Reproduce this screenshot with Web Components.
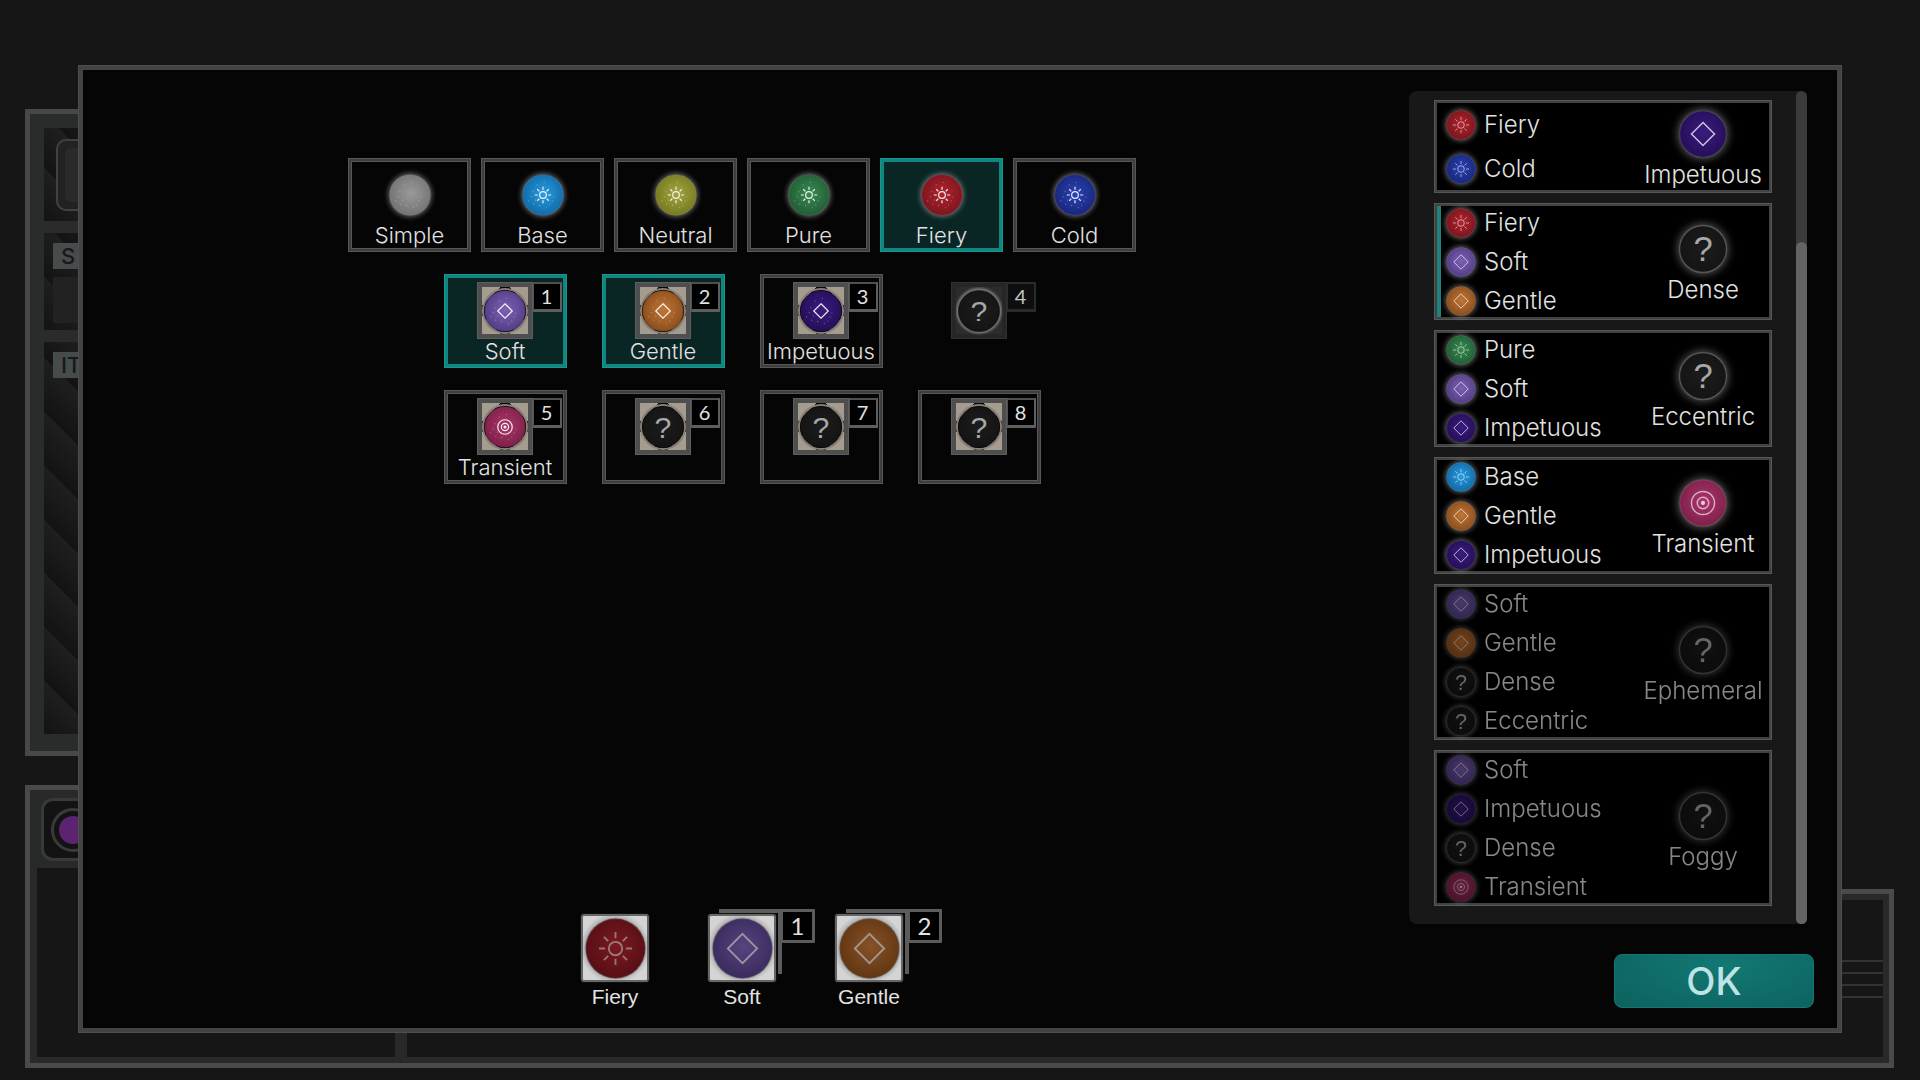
<!DOCTYPE html>
<html lang="en">
<head>
<meta charset="utf-8">
<title>Catalyst selection</title>
<style>
  html, body { height: 100%; }
  body {
    margin: 0;
    background: #161616;
    color: #e2e2e2;
    font-family: Inter, "Open Sans", sans-serif;
    font-weight: 300;
    overflow: hidden;
  }
</style>
</head>
<body>
<game-backdrop></game-backdrop>

<select-dialog>
  <tile-row slot="tiles">
    <element-tile kind="simple" label="Simple"></element-tile>
    <element-tile kind="base" label="Base"></element-tile>
    <element-tile kind="neutral" label="Neutral"></element-tile>
    <element-tile kind="pure" label="Pure"></element-tile>
    <element-tile kind="fiery" label="Fiery" selected></element-tile>
    <element-tile kind="cold" label="Cold"></element-tile>
  </tile-row>
  <tile-row slot="tiles" wide>
    <element-tile kind="soft" label="Soft" number="1" selected></element-tile>
    <element-tile kind="gentle" label="Gentle" number="2" selected></element-tile>
    <element-tile kind="impetuous" label="Impetuous" number="3"></element-tile>
    <element-tile kind="unknown" number="4" locked></element-tile>
  </tile-row>
  <tile-row slot="tiles" wide>
    <element-tile kind="transient" label="Transient" number="5"></element-tile>
    <element-tile kind="unknown" number="6"></element-tile>
    <element-tile kind="unknown" number="7"></element-tile>
    <element-tile kind="unknown" number="8"></element-tile>
  </tile-row>

  <picked-card slot="picked" kind="fiery" label="Fiery"></picked-card>
  <picked-card slot="picked" kind="soft" label="Soft" number="1"></picked-card>
  <picked-card slot="picked" kind="gentle" label="Gentle" number="2"></picked-card>

  <recipe-card slot="recipes" parts="Fiery,Cold" result="Impetuous"></recipe-card>
  <recipe-card slot="recipes" parts="Fiery,Soft,Gentle" result="Dense" active></recipe-card>
  <recipe-card slot="recipes" parts="Pure,Soft,Impetuous" result="Eccentric"></recipe-card>
  <recipe-card slot="recipes" parts="Base,Gentle,Impetuous" result="Transient"></recipe-card>
  <recipe-card slot="recipes" parts="Soft,Gentle,Dense,Eccentric" result="Ephemeral" dim></recipe-card>
  <recipe-card slot="recipes" parts="Soft,Impetuous,Dense,Transient" result="Foggy" dim></recipe-card>
</select-dialog>

<script>
// Orb colours: [centre, edge, glyph]
const KINDS = {
  simple:    ['#9a9a9a', '#727272', 'none'],
  base:      ['#2a9ce0', '#1068a4', 'sun'],
  neutral:   ['#a2a640', '#74791f', 'sun'],
  pure:      ['#3a8a52', '#1f5c34', 'sun'],
  fiery:     ['#b0242f', '#7a141d', 'sun'],
  cold:      ['#2a42b4', '#182678', 'sun'],
  soft:      ['#7c62b2', '#513c86', 'diamond'],
  gentle:    ['#c07638', '#8a4c1a', 'diamond'],
  impetuous: ['#3a1c80', '#240e56', 'diamond'],
  transient: ['#aa366a', '#7c1f48', 'rings'],
  unknown:   ['#1c1c1c', '#141414', 'question'],
};

const GLYPHS = {
  none: '',
  sun: `<circle r="11"/>
    <path d="M0-17V-27M0 17V27M-17 0H-27M17 0H27M-12-12L-19-19M12-12L19-19M-12 12L-19 19M12 12L19 19"/>`,
  diamond: '<path d="M0-24L24 0L0 24L-24 0Z"/>',
  rings: '<circle r="24"/><circle r="12"/><circle r="3" fill="currentColor"/>',
  question: '<text class="q" y="25" text-anchor="middle">?</text>',
};

const SPECKS = [[-24, -8], [-18, 12], [-28, 4], [-8, 25], [8, 30], [22, 14], [-14, -24], [-22, 22],
  [16, 24], [26, 5], [-34, 14], [3, -30]];

/** Kind for an element name; anything not discovered yet is unknown. */
function kindOf(name) {
  const key = name.toLowerCase();
  return KINDS[key] ? key : 'unknown';
}

// Renders styles() + template() into an open shadow root on connect.
class BaseElement extends HTMLElement {
  constructor() {
    super();
    this.attachShadow({ mode: 'open' });
  }

  connectedCallback() {
    this.shadowRoot.innerHTML = `<style>${this.styles()}</style>${this.template()}`;
  }

  attr(name) { return this.getAttribute(name) || ''; }
  styles() { return ''; }
  template() { return ''; }
}

// <alchemy-orb kind="fiery" sparkle> - size comes from --orb
class AlchemyOrb extends BaseElement {
  styles() {
    return `
      :host { display: block; width: var(--orb, 30px); height: var(--orb, 30px); flex: none; border-radius: 50%; }
      :host([glow]) { box-shadow: 0 0 var(--glow, 5px) 1px rgba(200, 200, 200, .45); }
      svg { display: block; width: 100%; height: 100%; overflow: visible; }
      .glyph { fill: none; stroke: currentColor; stroke-width: 3; color: rgba(255, 255, 255, .62); }
      .diamond { color: rgba(255, 255, 255, .75); }
      .sparkle { color: rgba(255, 255, 255, .9); stroke-width: 4; }
      .q { fill: #a8a8a8; stroke: none; font: 400 72px "Liberation Sans", Arial, sans-serif; }
      .specks { fill: rgba(255, 255, 255, .3); }
    `;
  }

  template() {
    const [centre, edge, glyph] = KINDS[this.attr('kind')];
    const sparkle = this.hasAttribute('sparkle') && glyph !== 'question';
    const scale = sparkle ? 0.72 : 1;
    const specks = sparkle ? SPECKS.map(([x, y]) => `<circle cx="${x}" cy="${y}" r="1.5"/>`).join('') : '';
    const rim = glyph === 'question' ? '#555' : 'rgba(150,150,150,.35)';
    return `
      <svg viewBox="-50 -50 100 100" aria-hidden="true">
        <defs>
          <radialGradient id="g" cx="52%" cy="46%" r="56%">
            <stop offset="0" stop-color="${centre}"/>
            <stop offset="1" stop-color="${edge}"/>
          </radialGradient>
        </defs>
        <circle r="49" fill="url(#g)" stroke="var(--rim, ${rim})" stroke-width="3"/>
        <g class="specks">${specks}</g>
        <g class="glyph ${glyph} ${sparkle ? 'sparkle' : ''}" transform="scale(${scale})">${GLYPHS[glyph]}</g>
      </svg>`;
  }
}

class TileRow extends BaseElement {
  styles() {
    return `
      :host { display: flex; justify-content: center; gap: 10px; }
      :host([wide]) { gap: 35px; }
    `;
  }

  template() { return '<slot></slot>'; }
}

class ElementTile extends BaseElement {
  styles() {
    return `
      :host { display: block; }
      button {
        position: relative;
        box-sizing: border-box;
        display: flex; flex-direction: column; align-items: center;
        width: 123px; height: 94px; padding: 15px 0 0;
        border: 1px solid #575757;
        box-shadow: inset 0 0 0 2px #3e3e3e, inset 0 0 0 3px #575757;
        background: none; color: inherit;
        font: inherit; font-size: 22px; line-height: 24px;
      }
      :host([selected]) button {
        border-color: #16968f; background: #092524;
        box-shadow: inset 0 0 0 3px #0f8680;
      }
      alchemy-orb { --orb: 42px; }
      .plain { margin-bottom: 7px; }
      :host([number]) button { padding-top: 7px; }
      .frame {
        box-sizing: border-box;
        display: grid; place-items: center;
        width: 56px; height: 57px;
        border: 5px solid #4e4e4e; outline: 1px solid #5e5e5e; outline-offset: -1px;
        background:
          linear-gradient(45deg, #a59c90 13px, transparent 13px, transparent calc(100% - 13px), #a59c90 calc(100% - 13px)),
          linear-gradient(135deg, #a59c90 13px, transparent 13px, transparent calc(100% - 13px), #a59c90 calc(100% - 13px)),
          #080808;
      }
      .frame alchemy-orb { --rim: rgba(0, 0, 0, .3); box-shadow: 0 0 0 2px #8a8278; }
      .badge {
        position: absolute; left: 88px; top: 7px;
        box-sizing: border-box; width: 29px; height: 30px;
        border: 2px solid #505050; border-left-width: 1px; border-right-color: #5e5e5e; border-bottom-color: #5e5e5e;
        border-bottom-width: 3px;
        background: #000;
        font: 400 20px/24px Lato, sans-serif; text-align: center;
      }
      :host([locked]) button { border-color: transparent; box-shadow: none; }
      :host([locked]) .frame {
        border-color: #262626; outline-color: #303030;
        background: radial-gradient(circle, #999 45%, #2c2c2c 75%);
      }
      :host([locked]) .frame alchemy-orb { box-shadow: 0 0 3px 1px #8a8a8a; }
      :host([locked]) .badge { border-color: #2a2a2a; background: #0e0e0e; color: #c4c4c4; }
    `;
  }

  template() {
    const number = this.attr('number');
    const orb = `<alchemy-orb kind="${this.attr('kind')}" sparkle ${number ? '' : 'glow class="plain"'}></alchemy-orb>`;
    const icon = number ? `<span class="frame">${orb}</span><span class="badge">${number}</span>` : orb;
    return `
      <button type="button" aria-pressed="${this.hasAttribute('selected')}"
        ${this.hasAttribute('locked') ? 'disabled' : ''}>${icon}<span>${this.attr('label')}</span></button>`;
  }
}

class PickedCard extends BaseElement {
  styles() {
    return `
      :host {
        position: relative;
        display: flex; flex-direction: column; align-items: center; gap: 3px; width: 68px;
        font: 400 21px/24px "Liberation Sans", Arial, sans-serif;
      }
      .plate {
        position: relative;
        box-sizing: border-box; width: 68px; height: 68px;
        display: grid; place-items: center;
        border: 2px solid #666; border-radius: 3px;
        background: radial-gradient(circle, #888 50%, #d4d4d4 78%);
        box-shadow: 0 0 0 1px #111;
      }
      alchemy-orb { --orb: 61px; filter: brightness(.7); }
      .back {
        position: absolute; left: 11px; top: -5px;
        box-sizing: border-box; width: 63px; height: 65px;
        border: 4px solid #5c5c5c; border-left: 0; border-bottom: 0;
      }
      .badge {
        position: absolute; left: 73px; top: -5px;
        box-sizing: border-box; width: 34px; height: 34px;
        border: 3px solid #5c5c5c; border-left-width: 2px; border-radius: 1px; background: #000;
        font: 400 24px/28px Lato, sans-serif; text-align: center;
      }
    `;
  }

  template() {
    const number = this.attr('number');
    return `
      ${number ? '<span class="back"></span>' : ''}
      <span class="plate"><alchemy-orb kind="${this.attr('kind')}"></alchemy-orb></span>
      ${number ? `<span class="badge">${number}</span>` : ''}
      <span>${this.attr('label')}</span>`;
  }
}

class RecipeCard extends BaseElement {
  styles() {
    return `
      :host {
        position: relative;
        display: flex; justify-content: space-between;
        min-height: 93px;
        background: #000;
        box-shadow: inset 0 0 0 1px #575757, inset 0 0 0 3px #424242;
        font-size: 24px; line-height: 24px;
      }
      :host([active])::before {
        content: ""; position: absolute; left: 3px; top: 3px; bottom: 3px;
        width: 4px; background: #1d837e;
      }
      ul {
        display: flex; flex-direction: column; justify-content: space-evenly;
        margin: 0; padding: 0 0 0 12px; list-style: none;
      }
      li { display: flex; align-items: center; gap: 8px; height: 39px; }
      .result {
        display: flex; flex-direction: column; align-items: center; justify-content: center; gap: 5px;
        width: 138px; padding-top: 4px;
      }
      .result alchemy-orb { --orb: 48px; --glow: 8px; }
      :host([dim]) ul, :host([dim]) .result { opacity: .6; }
    `;
  }

  template() {
    const result = this.attr('result');
    const parts = this.attr('parts').split(',')
        .map((name) => `<li><alchemy-orb kind="${kindOf(name)}" glow></alchemy-orb>${name}</li>`)
        .join('');
    return `
      <ul>${parts}</ul>
      <div class="result"><alchemy-orb kind="${kindOf(result)}" glow></alchemy-orb><span>${result}</span></div>`;
  }
}

class SelectDialog extends BaseElement {
  styles() {
    return `
      :host {
        position: fixed; inset: 65px 78px 47px;
        box-sizing: border-box;
        display: flex;
        border: 5px solid #434343; outline: 1px solid #4e4e4e; outline-offset: -1px;
        background: #050505;
      }
      main {
        flex: 1;
        display: flex; flex-direction: column; gap: 22px;
        padding: 88px 8px 19px 0;
      }
      .picked { display: flex; justify-content: center; gap: 59px; margin-top: auto; }
      aside {
        flex: none; width: 428px; box-sizing: border-box;
        display: flex; flex-direction: column; gap: 30px;
        padding: 21px 0 20px;
      }
      .list {
        flex: 1; display: flex; margin-right: 30px;
        border-radius: 8px; background: #181818;
      }
      .cards { flex: 1; display: flex; flex-direction: column; gap: 10px; padding: 9px 24px 0 25px; }
      .track { width: 11px; display: flex; border-radius: 6px; background: #3b3b3b; }
      .thumb { flex: 1; margin-top: 151px; border-radius: 6px; background: #646464; }
      .ok {
        align-self: flex-end; margin-right: 23px;
        width: 200px; height: 54px; padding: 0;
        border: 1px solid #157672; border-radius: 8px;
        background: radial-gradient(ellipse at 55% 20%, #127873, #0d615e);
        color: #bfe3e4; font: 500 38px/52px Inter, sans-serif;
      }
    `;
  }

  template() {
    return `
      <main>
        <slot name="tiles"></slot>
        <div class="picked"><slot name="picked"></slot></div>
      </main>
      <aside>
        <div class="list">
          <div class="cards"><slot name="recipes"></slot></div>
          <div class="track"><div class="thumb"></div></div>
        </div>
        <button class="ok" type="button">OK</button>
      </aside>`;
  }
}

// Game screen behind the dialog; only its edges stay visible.
class GameBackdrop extends BaseElement {
  styles() {
    return `
      :host {
        box-sizing: border-box;
        display: flex; flex-direction: column; gap: 29px;
        min-height: 100%; padding: 109px 26px 12px 25px;
      }
      .side {
        flex: 1; box-sizing: border-box; width: 340px;
        display: flex; flex-direction: column; gap: 12px;
        padding: 14px 14px 17px; border: 5px solid #484848; background: #292c2b;
      }
      .bay {
        box-sizing: border-box; padding: 10px 9px;
        background: repeating-linear-gradient(45deg, #131313 0, #1f1f1f 38px);
      }
      .portrait { height: 93px; padding: 11px 12px; }
      .portrait div {
        box-sizing: border-box; height: 72px; padding: 7px;
        border: 2px solid #404242; border-radius: 10px; background: #222;
      }
      .portrait i { display: block; height: 54px; border-radius: 6px; background: #2a2a2a; }
      .slots { height: 97px; }
      .items { flex: 1; }
      .tag {
        display: block; height: 26px; padding-left: 8px; background: #464b4b;
        color: #161818; font: 500 22px/26px Inter, sans-serif;
      }
      .slot { height: 46px; margin-top: 8px; background: #222; }
      .bottom { display: flex; align-items: flex-end; height: 283px; }
      .log, .stats {
        box-sizing: border-box; display: flex; flex-direction: column;
        border: 5px solid #4a4a4a; background: #282a2a; padding: 6px 6px 6px 7px;
      }
      .log { width: 376px; height: 283px; border-right: 0; padding-top: 8px; }
      .stats { flex: 1; height: 179px; border-left: 0; padding-left: 6px; }
      .chip {
        box-sizing: border-box; display: grid; place-items: center;
        width: 64px; height: 63px; margin: 0 0 7px 4px;
        border: 3px solid #373a39; border-radius: 12px; background: #131313;
      }
      .chip i {
        width: 28px; height: 28px; border: 5px solid #131313; border-radius: 50%;
        outline: 3px solid #393b3b; background: #5c2370;
      }
      .fill { flex: 1; background: #161616; }
      .lines { display: flex; flex-direction: column; gap: 10px; padding-top: 60px; }
      .lines i { height: 2px; background: #333; }
    `;
  }

  template() {
    return `
      <div class="side">
        <div class="bay portrait"><div><i></i></div></div>
        <div class="bay slots"><span class="tag">S</span><div class="slot"></div></div>
        <div class="bay items"><span class="tag">IT</span></div>
      </div>
      <div class="bottom">
        <div class="log"><div class="chip"><i></i></div><div class="fill"></div></div>
        <div class="stats"><div class="fill lines"><i></i><i></i><i></i><i></i></div></div>
      </div>`;
  }
}

customElements.define('alchemy-orb', AlchemyOrb);
customElements.define('tile-row', TileRow);
customElements.define('element-tile', ElementTile);
customElements.define('picked-card', PickedCard);
customElements.define('recipe-card', RecipeCard);
customElements.define('select-dialog', SelectDialog);
customElements.define('game-backdrop', GameBackdrop);
</script>
</body>
</html>
